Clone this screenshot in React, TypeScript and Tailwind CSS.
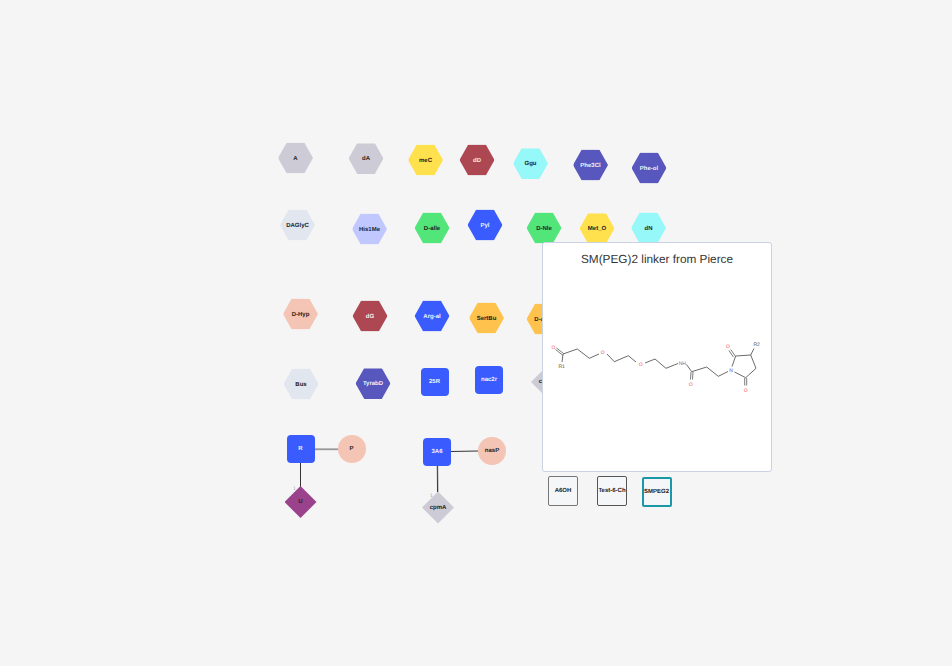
const HEX = 'w-[35px] h-[31px] [clip-path:polygon(0_50%,25%_0,75%_0,100%_50%,75%_100%,25%_100%)]'
const SQUARE = 'w-[28px] h-[28px] rounded-[4px]'
const CIRCLE = 'w-[28px] h-[28px] rounded-full'
const DIAMOND = 'w-[32px] h-[32px] [clip-path:polygon(50%_0,100%_50%,50%_100%,0_50%)]'

const GRAY = 'bg-[#cdcbd6] text-[#222222]'
const YELLOW = 'bg-[#ffe14d] text-[#222222]'
const RED = 'bg-[#ad4752] text-[#f4f4f8]'
const CYAN = 'bg-[#96f8f8] text-[#222222]'
const PURPLE = 'bg-[#5757bd] text-[#f4f4f8]'
const SILVER = 'bg-[#e2e6ee] text-[#222222]'
const PERI = 'bg-[#c0c8ff] text-[#222222]'
const GREEN = 'bg-[#52e57a] text-[#222222]'
const BLUE = 'bg-[#3a5cff] text-[#f4f4f8]'
const SALMON = 'bg-[#f4c4b4] text-[#222222]'
const ORANGE = 'bg-[#ffc34d] text-[#222222]'
const PLUM = 'bg-[#9a438c] text-[#222222]'

const monomers = [
  { label: 'A', x: 295.5, y: 158, shape: HEX, color: GRAY },
  { label: 'dA', x: 366, y: 158.5, shape: HEX, color: GRAY },
  { label: 'meC', x: 425.5, y: 160, shape: HEX, color: YELLOW },
  { label: 'dD', x: 477, y: 160, shape: HEX, color: RED },
  { label: 'Ggu', x: 530.5, y: 163.5, shape: HEX, color: CYAN },
  { label: 'Phe3Cl', x: 590.5, y: 165, shape: HEX, color: PURPLE },
  { label: 'Phe-ol', x: 649, y: 168, shape: HEX, color: PURPLE },
  { label: 'DAGlyC', x: 297.5, y: 225, shape: HEX, color: SILVER },
  { label: 'His1Me', x: 369.5, y: 229, shape: HEX, color: PERI },
  { label: 'D-alle', x: 432, y: 228, shape: HEX, color: GREEN },
  { label: 'Pyl', x: 485, y: 225, shape: HEX, color: BLUE },
  { label: 'D-Nle', x: 544, y: 228, shape: HEX, color: GREEN },
  { label: 'Met_O', x: 597, y: 228.5, shape: HEX, color: YELLOW },
  { label: 'dN', x: 648.5, y: 228, shape: HEX, color: CYAN },
  { label: 'D-Hyp', x: 300.5, y: 314, shape: HEX, color: SALMON },
  { label: 'dG', x: 370, y: 316, shape: HEX, color: RED },
  { label: 'Arg-al', x: 432, y: 316, shape: HEX, color: BLUE },
  { label: 'SertBu', x: 486.5, y: 318, shape: HEX, color: ORANGE },
  { label: 'D-aThr', x: 544, y: 319, shape: HEX, color: ORANGE },
  { label: 'Bus', x: 301, y: 384, shape: HEX, color: SILVER },
  { label: 'TyrabD', x: 373, y: 383.5, shape: HEX, color: PURPLE },
  { label: '25R', x: 434.5, y: 382, shape: SQUARE, color: BLUE },
  { label: 'nac2r', x: 489, y: 380, shape: SQUARE, color: BLUE },
  { label: 'cpmA', x: 547, y: 382, shape: DIAMOND, color: GRAY },
  { label: 'R', x: 300.5, y: 449, shape: SQUARE, color: BLUE },
  { label: 'P', x: 351.5, y: 449, shape: CIRCLE, color: SALMON },
  { label: 'U', x: 300.5, y: 502, shape: DIAMOND, color: PLUM },
  { label: '3A6', x: 437, y: 452, shape: SQUARE, color: BLUE },
  { label: 'nasP', x: 492, y: 451, shape: CIRCLE, color: SALMON },
  { label: 'cpmA', x: 438, y: 507.5, shape: DIAMOND, color: GRAY },
]

const presets = [
  { label: 'A6OH', x: 563, y: 490.5, border: 'border-[1.5px] border-[#777777]' },
  { label: 'Test-6-Ch', x: 612, y: 491, border: 'border-[1.5px] border-[#555555]' },
  { label: 'SMPEG2', x: 656.5, y: 491.5, border: 'border-2 border-[#1b98a8]' },
]

// skeleton of the linker, in panel coordinates
const bonds = [
  [20, 111, 19, 119], [20, 111, 34.3, 106], [34.3, 106, 46.3, 115.3], [46.3, 115.3, 56, 111], [64, 111, 71.3, 118.7],
  [71.3, 118.7, 85.3, 112.7], [85.3, 112.7, 93, 119], [102, 120, 112, 116], [112, 116, 123, 125.3],
  [123, 125.3, 135, 120.5], [143.5, 121.5, 148.7, 128.7], [148.7, 128.7, 163.7, 124], [163.7, 124, 175.3, 133.3],
  [175.3, 133.3, 185, 128.5], [189, 123.5, 192.7, 113], [192.7, 113, 207.7, 112], [207.7, 112, 213, 125.3],
  [213, 125.3, 202.7, 134.7], [202.7, 134.7, 191.5, 129], [207.7, 112, 211, 105.5],
]

const doubleBonds = [
  [13.5, 105, 20.5, 110.5, 12.5, 106.5, 19.5, 112],
  [148, 129, 147.5, 136.5, 150, 129, 149.5, 136.5],
  [192.2, 113, 187.7, 106.5, 190.4, 114, 185.9, 107.5],
  [201.7, 135, 201.7, 142.5, 203.7, 135, 203.7, 142.5],
]

const atoms = [
  { t: 'O', x: 10.5, y: 103.7, c: '#f2545b' },
  { t: 'R1', x: 18.7, y: 123, c: '#444444' },
  { t: 'O', x: 59.7, y: 109.3, c: '#f2545b' },
  { t: 'O', x: 97.7, y: 121.3, c: '#f2545b' },
  { t: 'NH', x: 139.3, y: 120.3, c: '#6a6fa8' },
  { t: 'O', x: 147.7, y: 141, c: '#f2545b' },
  { t: 'N', x: 188, y: 127, c: '#4a55b8' },
  { t: 'O', x: 185, y: 103, c: '#f2545b' },
  { t: 'R2', x: 213.7, y: 101, c: '#444444' },
  { t: 'O', x: 202.7, y: 147, c: '#f2545b' },
]

function Linker() {
  return (
    <svg viewBox="0 0 228 228" className="absolute left-0 top-0 w-[228px] h-[228px]">
      {bonds.map(([x1, y1, x2, y2], i) => (
        <line key={i} x1={x1} y1={y1} x2={x2} y2={y2} stroke="#444444" strokeWidth="0.8" />
      ))}
      {doubleBonds.map(([a, b, c, d, e, f, g, h], i) => (
        <g key={i} stroke="#444444" strokeWidth="0.7">
          <line x1={a} y1={b} x2={c} y2={d} />
          <line x1={e} y1={f} x2={g} y2={h} />
        </g>
      ))}
      {atoms.map((a, i) => (
        <text key={i} x={a.x} y={a.y + 1.8} fontSize="5" textAnchor="middle" fill={a.c} fontFamily="Liberation Sans, sans-serif">
          {a.t}
        </text>
      ))}
    </svg>
  )
}

export default function App() {
  return (
    <div className="relative w-[952px] h-[666px] overflow-hidden bg-[#f5f5f5] font-['Liberation_Sans',Arial,sans-serif] [text-rendering:geometricPrecision]">
      {/* connectors */}
      <svg className="absolute left-0 top-0 w-[952px] h-[666px] opacity-[0.99]">
        <line x1="314" y1="449.5" x2="338" y2="449.5" stroke="#b5b5b5" strokeWidth="1.5" />
        <line x1="314" y1="449" x2="338" y2="449" stroke="#555555" strokeWidth="0.6" />
        <line x1="300.5" y1="463" x2="300.5" y2="487" stroke="#333333" strokeWidth="1" />
        <line x1="451" y1="451.5" x2="478" y2="451" stroke="#333333" strokeWidth="1" />
        <line x1="438" y1="466" x2="438.5" y2="492" stroke="#c4c4c4" strokeWidth="1" />
        <line x1="437.3" y1="466" x2="437.5" y2="492" stroke="#333333" strokeWidth="1" />
        <text x="293" y="490" fontSize="5" fill="#aaaaaa" fontFamily="Liberation Sans, sans-serif">1</text>
        <text x="430" y="497" fontSize="5" fill="#999999" fontFamily="Liberation Sans, sans-serif">1</text>
      </svg>

      {monomers.map((m, i) => (
        <div
          key={i}
          className={`absolute flex -translate-x-1/2 -translate-y-1/2 items-center justify-center text-[6px] font-bold leading-none whitespace-nowrap ${m.shape} ${m.color}`}
          style={{ left: m.x, top: m.y }}
        >
          <span className="opacity-[0.99]">{m.label}</span>
        </div>
      ))}

      {presets.map(p => (
        <div
          key={p.label}
          className={`absolute flex h-[30px] w-[30px] -translate-x-1/2 -translate-y-1/2 items-center justify-center whitespace-nowrap rounded-[2px] bg-[#f5f6f8] text-[6px] font-bold leading-none text-[#222222] ${p.border}`}
          style={{ left: p.x, top: p.y }}
        >
          <span className="opacity-[0.99]">{p.label}</span>
        </div>
      ))}

      {/* structure preview */}
      <div className="absolute left-[542px] top-[242px] h-[230px] w-[230px] rounded-[3px] border border-[#c8d2e0] bg-white">
        <p className="pt-[8.5px] text-center text-[11.8px] leading-[15px] text-[#333333] opacity-[0.99]">SM(PEG)2 linker from Pierce</p>
        <div className="opacity-[0.99]">
          <Linker />
        </div>
      </div>
    </div>
  )
}
